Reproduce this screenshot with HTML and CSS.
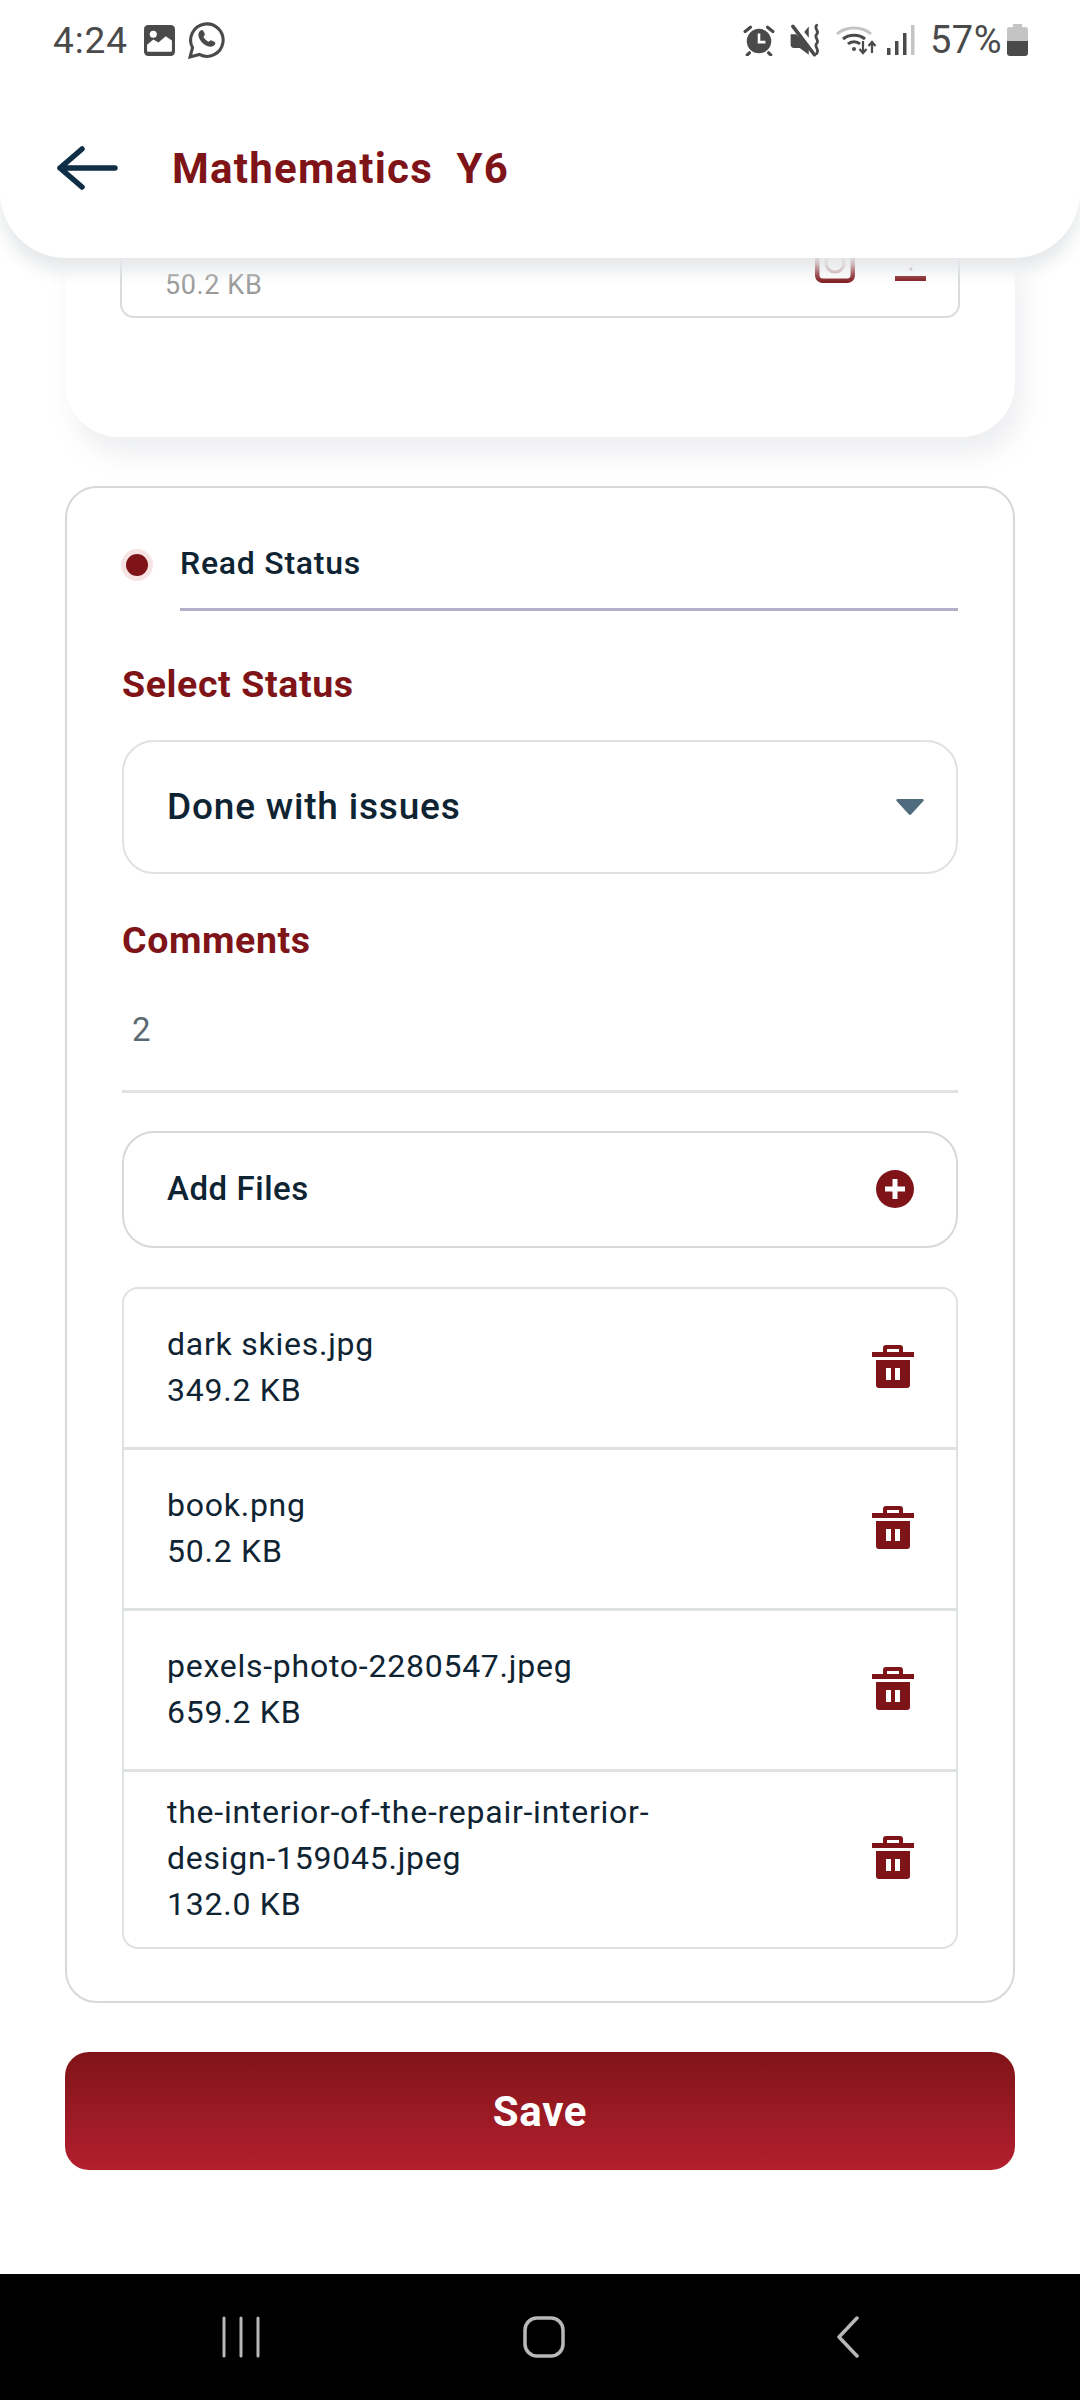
FILE: index.html
```html
<!DOCTYPE html>
<html lang="en">
<head>
<meta charset="utf-8">
<title>Mathematics Y6</title>
<link rel="stylesheet" href="styles.css">
</head>
<body>
<div class="app">
  <header class="header">
    <div class="status">
      <div class="status-left">
        <span class="time">4:24</span>
        <svg class="ic-gallery" viewBox="0 0 30 30"><path fill="#4a4a4a" d="M4 0h22a4 4 0 0 1 4 4v22a4 4 0 0 1-4 4H4a4 4 0 0 1-4-4V4a4 4 0 0 1 4-4z"/><circle cx="9" cy="9" r="3.4" fill="#fff"/><path fill="#fff" d="M3 25v-6l6-5 5 3 7-6 6 4v10a1 1 0 0 1-1 1H4a1 1 0 0 1-1-1z"/></svg>
        <svg class="ic-whatsapp" viewBox="0 0 36 37"><path fill="none" stroke="#4a4a4a" stroke-width="3" d="M2 35l2.400-9A15.800 15.800 0 1 1 11 32.600z"/><path fill="#4a4a4a" d="M12 9.500c1-1 2.200-1 2.800 0l1.500 3c.3.700 0 1.300-1.300 2.800 1.200 2.300 3 3.900 5.200 5 1.500-1.500 2-1.800 2.700-1.400l3 1.500c.9.500 1 1.500.3 2.600-1 1.700-3.400 2.500-5.600 1.900-5-1.300-9.400-5.600-10.400-10.400-.4-2 .3-3.700 1.800-5z"/></svg>
      </div>
      <div class="status-right">
        <svg class="ic-alarm" viewBox="0 0 30 30"><circle cx="15" cy="16" r="11.500" fill="#4a4a4a"/><path fill="none" stroke="#fff" stroke-width="2.400" d="M15 9v8h6"/><path stroke="#4a4a4a" stroke-width="3" stroke-linecap="round" d="M2 7l5-4M28 7l-5-4M6 27l-2 2M24 27l2 2"/></svg>
        <svg class="ic-mute" viewBox="0 0 30 30"><path fill="#4a4a4a" d="M1 10h5l8 8 3 4v6l-8-6H4a3 3 0 0 1-3-3zM13 8l4-5v10z"/><path stroke="#4a4a4a" stroke-width="3.200" stroke-linecap="round" d="M3 3l19 25"/><path fill="none" stroke="#4a4a4a" stroke-width="2.400" stroke-linecap="round" d="M24 2c-3 3 3 5 0 8s3 5 0 8 3 5 0 9"/></svg>
        <svg class="ic-wifi" viewBox="0 0 42 30"><path fill="none" stroke="#c4c4c4" stroke-width="3" d="M1 9c9-8 25-8 34 0"/><path fill="none" stroke="#4a4a4a" stroke-width="3" d="M7 14c6-5 16-5 22 0M12 19c3-3 9-3 12 0"/><circle cx="18" cy="24" r="2" fill="#4a4a4a"/><path fill="none" stroke="#4a4a4a" stroke-width="2.200" d="M27 16v12M23.500 24l3.500 4 3.500-4M36 28V17M32.500 21l3.500-4 3.500 4"/></svg>
        <svg class="ic-signal" viewBox="0 0 28 30"><path fill="#4a4a4a" d="M0 23h3.500v7H0zM8 16h3.500v14H8zM16 8h3.500v22H16z"/><path fill="#c4c4c4" d="M24 0h3.500v30H24z"/></svg>
        <span class="pct">57%</span>
        <svg class="ic-battery" viewBox="0 0 21 32"><path fill="#c4c4c4" d="M6 0h9v3h3a3 3 0 0 1 3 3v13H0V6a3 3 0 0 1 3-3h3z"/><path fill="#4a4a4a" d="M0 17h21v12a3 3 0 0 1-3 3H3a3 3 0 0 1-3-3z"/></svg>
      </div>
    </div>
    <div class="titlebar">
      <svg class="ic-back" viewBox="0 0 64 44"><path fill="none" stroke="#0e2f46" stroke-width="5.500" stroke-linecap="round" stroke-linejoin="round" d="M60 22H5M27 3 5 22l22 19"/></svg>
      <h1 class="title">Mathematics&nbsp; Y6</h1>
    </div>
  </header>

  <main class="content">
    <section class="prev-card">
      <div class="prev-file">
        <span class="prev-size">50.2 KB</span>
        <div class="prev-actions">
          <svg class="ic-prev-a" viewBox="0 0 40 25"><path fill="none" stroke="#7f1418" stroke-width="4.500" d="M2.200-5v22a5.800 5.800 0 0 0 5.800 5.800h24a5.800 5.800 0 0 0 5.800-5.800V-5"/><circle cx="20" cy="5" r="9" fill="none" stroke="#c9a3a5" stroke-width="3"/></svg>
          <svg class="ic-prev-b" viewBox="0 0 31 24"><circle cx="16" cy="11" r="1.500" fill="#b09a9c"/><path fill="#7f1418" d="M0 18h31v5H0z"/></svg>
        </div>
      </div>
    </section>

    <section class="form-card">
      <div class="radio-row">
        <span class="radio"><span class="radio-dot"></span></span>
        <span class="radio-label">Read Status</span>
      </div>
      <h2 class="label label-status">Select Status</h2>
      <div class="select">
        <span class="select-value">Done with issues</span>
        <svg class="ic-caret" viewBox="0 0 28 16"><path fill="#4f6b7d" d="M1.500 0h25a1.200 1.200 0 0 1 .9 2L15 15.500a1.400 1.400 0 0 1-2 0L.6 2A1.200 1.200 0 0 1 1.500 0z"/></svg>
      </div>
      <h2 class="label label-comments">Comments</h2>
      <div class="comment">2</div>
      <div class="add-files">
        <span class="add-label">Add Files</span>
        <svg class="ic-plus" viewBox="0 0 38 38"><circle cx="19" cy="19" r="19" fill="#7f1418"/><path stroke="#fff" stroke-width="5" d="M19 9v20M9 19h20"/></svg>
      </div>
      <ul class="files">
        <li class="file">
          <div class="file-text">dark skies.jpg<br>349.2 KB</div>
          <svg class="ic-trash" viewBox="0 0 42 43"><path fill="#7f1418" d="M0 7h42v5H0zM11 7V3a3 3 0 0 1 3-3h14a3 3 0 0 1 3 3v4h-4V4H15v3zM4 15h34v25a3 3 0 0 1-3 3H7a3 3 0 0 1-3-3z"/><path fill="#fff" d="M14 23h5v12h-5zM23 23h5v12h-5z"/></svg>
        </li>
        <li class="file">
          <div class="file-text">book.png<br>50.2 KB</div>
          <svg class="ic-trash" viewBox="0 0 42 43"><path fill="#7f1418" d="M0 7h42v5H0zM11 7V3a3 3 0 0 1 3-3h14a3 3 0 0 1 3 3v4h-4V4H15v3zM4 15h34v25a3 3 0 0 1-3 3H7a3 3 0 0 1-3-3z"/><path fill="#fff" d="M14 23h5v12h-5zM23 23h5v12h-5z"/></svg>
        </li>
        <li class="file">
          <div class="file-text">pexels-photo-2280547.jpeg<br>659.2 KB</div>
          <svg class="ic-trash" viewBox="0 0 42 43"><path fill="#7f1418" d="M0 7h42v5H0zM11 7V3a3 3 0 0 1 3-3h14a3 3 0 0 1 3 3v4h-4V4H15v3zM4 15h34v25a3 3 0 0 1-3 3H7a3 3 0 0 1-3-3z"/><path fill="#fff" d="M14 23h5v12h-5zM23 23h5v12h-5z"/></svg>
        </li>
        <li class="file">
          <div class="file-text">the-interior-of-the-repair-interior-design-159045.jpeg<br>132.0 KB</div>
          <svg class="ic-trash" viewBox="0 0 42 43"><path fill="#7f1418" d="M0 7h42v5H0zM11 7V3a3 3 0 0 1 3-3h14a3 3 0 0 1 3 3v4h-4V4H15v3zM4 15h34v25a3 3 0 0 1-3 3H7a3 3 0 0 1-3-3z"/><path fill="#fff" d="M14 23h5v12h-5zM23 23h5v12h-5z"/></svg>
        </li>
      </ul>
    </section>

    <button class="save" type="button">Save</button>
  </main>

  <nav class="navbar">
    <svg class="ic-recents" viewBox="0 0 40 42"><path stroke="#b8b8b8" stroke-width="3" stroke-linecap="round" d="M3 2v38M20 2v38M37 2v38"/></svg>
    <svg class="ic-home" viewBox="0 0 42 42"><rect x="2" y="2" width="38" height="38" rx="12" fill="none" stroke="#b8b8b8" stroke-width="3.500"/></svg>
    <svg class="ic-navback" viewBox="0 0 24 42"><path fill="none" stroke="#b8b8b8" stroke-width="3.500" stroke-linecap="round" stroke-linejoin="round" d="M21 2 3 21l18 19"/></svg>
  </nav>
</div>
</body>
</html>
```

FILE: styles.css
```css
* { box-sizing: border-box; }
html, body { margin: 0; padding: 0; }
body { width: 1080px; height: 2400px; background: #fff; font-family: Roboto, "Liberation Sans", sans-serif; color: #0f2433; overflow: hidden; }
.app { width: 1080px; height: 2400px; display: flex; flex-direction: column; }

.header { position: relative; z-index: 2; height: 258px; flex: none; background: #fff; border-radius: 0 0 66px 66px; box-shadow: 0 13px 16px rgba(229, 231, 233, .96); }
.status { height: 80px; padding: 0 52px 0 53px; display: flex; align-items: center; justify-content: space-between; color: #4a4a4a; }
.status-left, .status-right { display: flex; align-items: center; }
.time { font-size: 37px; letter-spacing: .9px; }
.pct { font-size: 38px; letter-spacing: .5px; }
.ic-gallery { width: 31px; height: 31px; margin-left: 16px; }
.ic-whatsapp { width: 37px; height: 38px; margin-left: 13px; }
.ic-alarm { width: 32px; height: 32px; }
.ic-mute { width: 35px; height: 34px; margin-left: 14px; }
.ic-wifi { width: 42px; height: 30px; margin-left: 12px; }
.ic-signal { width: 28px; height: 30px; margin-left: 9px; }
.pct { margin-left: 15px; }
.ic-battery { width: 21px; height: 32px; margin-left: 5px; }

.titlebar { display: flex; align-items: center; padding: 0 0 0 55px; height: 176px; }
.ic-back { width: 64px; height: 44px; }
.title { margin: 0 0 0 53px; font-size: 42px; font-weight: 700; color: #7f1418; letter-spacing: 1.25px; white-space: pre; }

.content { flex: 1; display: flex; flex-direction: column; padding: 0 65px; overflow: hidden; }

.prev-card { height: 179px; flex: none; margin-bottom: 49px; padding: 0 55px; background: #fff; border-radius: 0 0 54px 54px; box-shadow: 8px 18px 24px rgba(120, 135, 145, .13); }
.prev-file { height: 60px; border: 2px solid #d9dcde; border-top: 0; border-radius: 0 0 14px 14px; padding: 0 0 0 44px; display: flex; justify-content: space-between; }
.prev-size { font-size: 27px; color: #9a9a9a; letter-spacing: .6px; line-height: 38px; margin-top: 8px; margin-left: -1px; }
.prev-actions { display: flex; align-items: flex-start; padding-right: 32px; }
.ic-prev-a { width: 40px; height: 25px; display: block; }
.ic-prev-b { width: 31px; height: 24px; margin-left: 40px; display: block; }

.form-card { height: 1517px; flex: none; border: 2.500px solid #d5d9db; border-radius: 32px; padding: 0 55px; }
.radio-row { display: flex; align-items: center; height: 123px; padding-top: 30px; }
.radio { width: 32px; height: 32px; flex: none; border-radius: 50%; background: #f6e4e4; display: flex; align-items: center; justify-content: center; margin-left: -1px; }
.radio-dot { width: 22px; height: 22px; border-radius: 50%; background: #7f1418; }
.radio-label { flex: 1; margin-left: 27px; height: 93px; line-height: 91px; font-size: 32px; font-weight: 500; letter-spacing: .75px; border-bottom: 3px solid #b3afc9; }
.label { margin: 0; font-size: 37.500px; font-weight: 700; color: #7f1418; letter-spacing: .6px; }
.label-status { margin-top: 51px; line-height: 44px; }
.select { margin-top: 34px; height: 133.500px; border: 2px solid #dfe2e3; border-radius: 32px; padding: 0 32px 0 43px; display: flex; align-items: center; justify-content: space-between; }
.select-value { font-size: 37px; font-weight: 500; letter-spacing: .8px; }
.ic-caret { width: 28px; height: 16px; }
.label-comments { margin-top: 44px; line-height: 44px; }
.comment { height: 131px; padding: 46px 0 0 10px; font-size: 33px; line-height: 44px; color: #5c6a74; border-bottom: 3px solid #e1e3e4; }
.add-files { margin-top: 38.500px; height: 117px; border: 2.500px solid #d5d9db; border-radius: 32px; padding: 0 42px 2px 43px; display: flex; align-items: center; justify-content: space-between; }
.add-label { font-size: 33px; font-weight: 500; letter-spacing: .55px; }
.ic-plus { width: 38px; height: 38px; }
.files { list-style: none; margin: 39px 0 0; padding: 0; border: 2px solid #dfe2e3; border-radius: 16px; }
.file { min-height: 161px; padding: 19px 42px 22px 43px; display: flex; align-items: center; justify-content: space-between; border-top: 3px solid #dfe2e3; }
.file:first-child { border-top: 0; min-height: 158px; }
.file:last-child { min-height: 0; padding-top: 16.500px; padding-bottom: 20px; }
.file-text { width: 540px; font-size: 32px; line-height: 46px; letter-spacing: .75px; }
.ic-trash { width: 42px; height: 43px; flex: none; }

.save { margin-top: 49px; height: 118px; flex: none; border: 0; border-radius: 24px; background: linear-gradient(#7f1418, #b41f2e); color: #fff; font-family: inherit; font-size: 42px; font-weight: 700; letter-spacing: .7px; }

.navbar { height: 126px; flex: none; background: #000; display: flex; align-items: center; padding: 42px 0 42px 221px; }
.ic-recents { width: 40px; height: 42px; }
.ic-home { width: 42px; height: 42px; margin-left: 262px; }
.ic-navback { width: 24px; height: 42px; margin-left: 271px; }
```
